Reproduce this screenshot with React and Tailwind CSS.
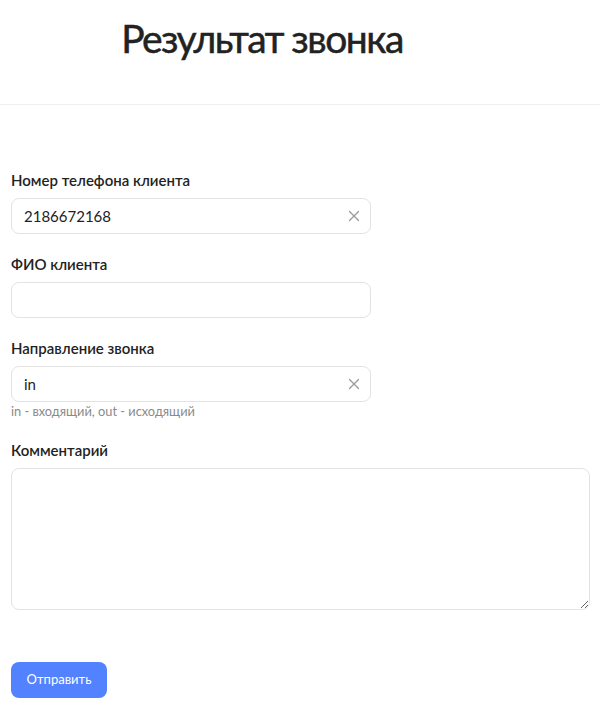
import React from "react";

function ClearIcon() {
  return (
    <svg width="12" height="12" viewBox="0 0 12 12" className="text-[#9a9a9a]">
      <path d="M1.5 1.5 L10.5 10.5 M10.5 1.5 L1.5 10.5" stroke="currentColor" strokeWidth="1.3" strokeLinecap="round" />
    </svg>
  );
}

function Field({ label, value, clear, hint }) {
  return (
    <div className="flex flex-col">
      <div className="h-[20px] leading-[20px] text-[15px] font-semibold text-[#222]">{label}</div>
      <div className="mt-[8px] w-[360px] h-[36px] border border-[#e3e3e3] rounded-[8px] flex items-center pl-[12px] pr-[10px]">
        <span className="flex-1 text-[15px] text-[#222]">{value}</span>
        {clear && <ClearIcon />}
      </div>
      {hint && <div className="mt-[1px] text-[12.8px] leading-[16px] text-[#8a8a8a]">{hint}</div>}
    </div>
  );
}

export default function App() {
  return (
    <div className="w-[600px] h-[710px] bg-white text-[#222]" style={{ fontFamily: "Lato, 'Noto Sans', sans-serif" }}>
      <div className="h-[105px] border-b border-[#f0f0f0]">
        <div className="w-[524px] flex justify-center pt-[14px]">
          <h1 className="text-[39px] leading-[48px] font-normal tracking-[-1.5px] text-[#222] [-webkit-text-stroke:0.5px_#222]">Результат звонка</h1>
        </div>
      </div>
      <div className="px-[11px] pt-[65px] flex flex-col">
        <Field label="Номер телефона клиента" value="2186672168" clear />
        <div className="h-[20px]" />
        <Field label="ФИО клиента" value="" />
        <div className="h-[20px]" />
        <Field label="Направление звонка" value="in" clear hint="in - входящий, out - исходящий" />
        <div className="h-[21px]" />
        <div className="h-[20px] leading-[20px] text-[15px] font-semibold text-[#222]">Комментарий</div>
        <textarea className="mt-[8px] w-[579px] h-[142px] border border-[#e3e3e3] rounded-[8px] outline-none" />
        <button className="mt-[52px] w-[96px] h-[36px] rounded-[8px] bg-[#5282ff] text-white text-[13px]">Отправить</button>
      </div>
    </div>
  );
}
